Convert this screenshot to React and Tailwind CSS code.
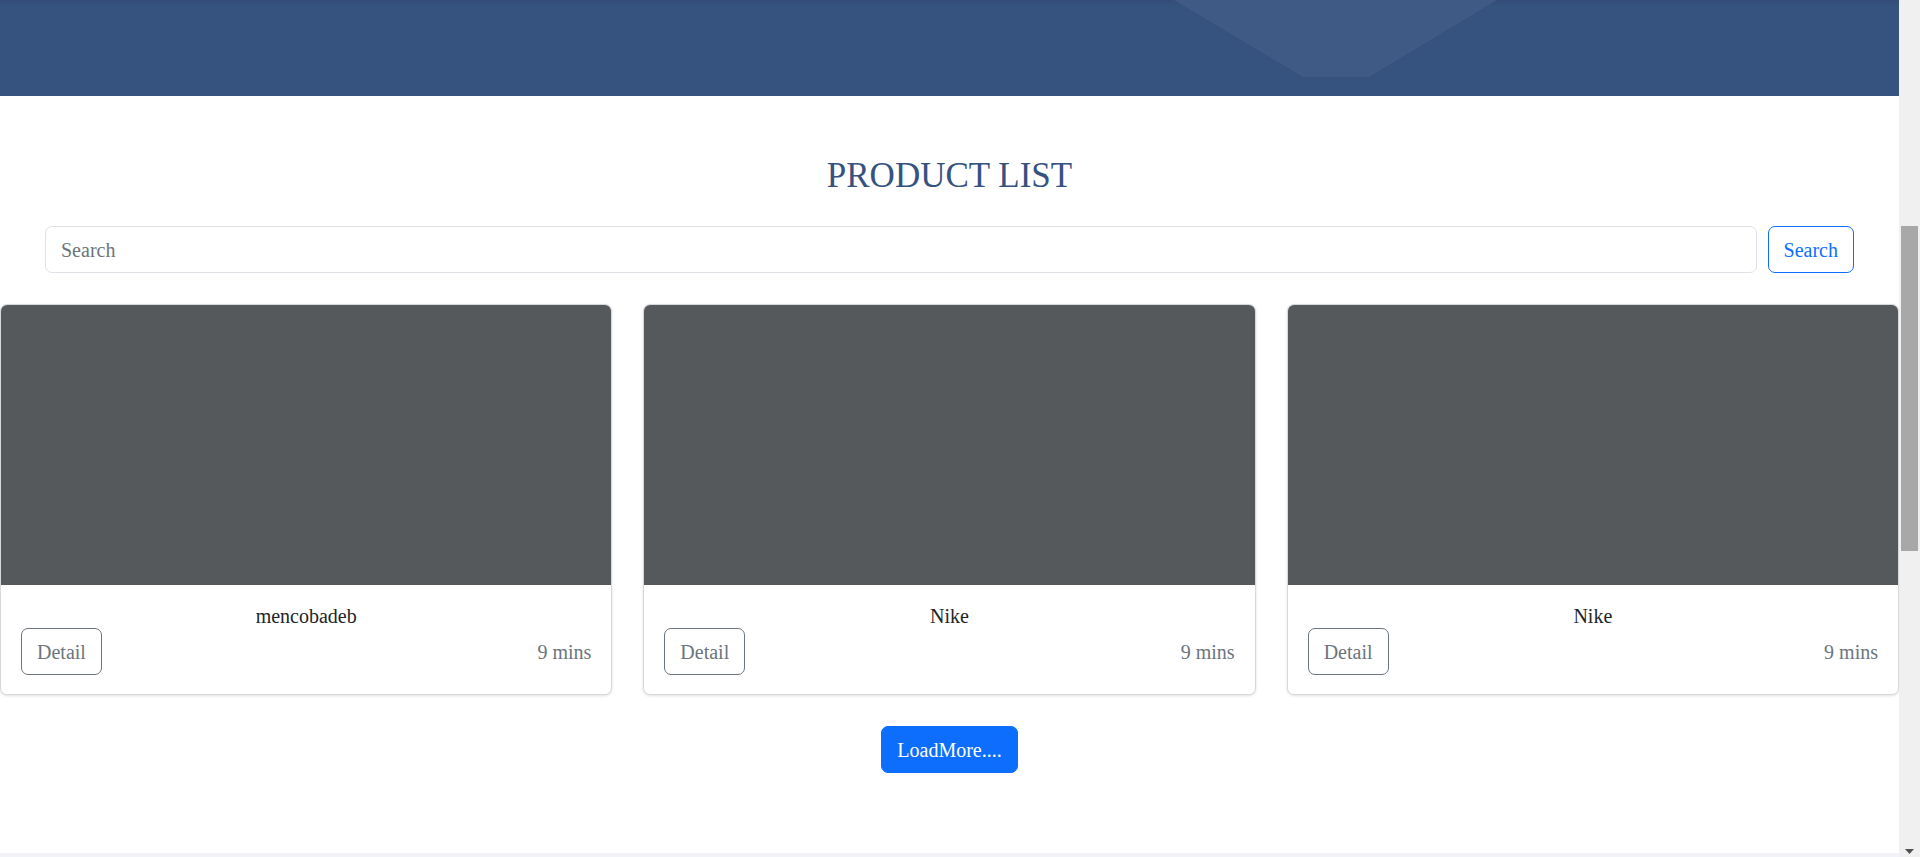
import React from "react";

const products = [
  { name: "mencobadeb", time: "9 mins" },
  { name: "Nike", time: "9 mins" },
  { name: "Nike", time: "9 mins" },
];

function Card({ name, time }) {
  return (
    <div className="flex flex-col overflow-hidden rounded-[7px] border border-[#d6d8db] bg-white shadow-[0_1px_3px_rgba(0,0,0,0.12)]">
      <div className="h-[280px] bg-[#55595c]" />
      <div className="flex flex-col px-5 pt-[19px] pb-[19px]">
        <div className="text-center text-[20px] leading-[24px] text-[#212529]">{name}</div>
        <div className="flex items-center justify-between">
          <button className="h-[47px] rounded-[7px] border border-[#6c757d] bg-white px-[15px] pt-[1px] text-[20px] leading-[30px] text-[#6c757d]">
            Detail
          </button>
          <span className="text-[20px] leading-[30px] text-[#6c757d]">{time}</span>
        </div>
      </div>
    </div>
  );
}

export default function App() {
  return (
    <div className="flex h-[857px] w-[1920px] overflow-hidden bg-white font-['Liberation_Serif','Times_New_Roman',serif]">
      <main className="flex min-w-0 flex-1 flex-col">
        <header className="relative h-[96px] shrink-0 bg-[linear-gradient(to_bottom,#334c78_0px,#36527f_6px,#36527f_100%)]">
          <svg
            className="absolute left-0 top-0"
            width="1899"
            height="96"
            viewBox="0 0 1899 96"
          >
            <polygon points="1174,0 1497,0 1369,77 1303,77" fill="#405a86" />
          </svg>
        </header>

        <h3 className="mt-[59px] text-center text-[35px] font-normal leading-[42px] text-[#36527f]">
          PRODUCT LIST
        </h3>

        <div className="mt-[29px] flex gap-[11px] px-[45px]">
          <input
            type="text"
            placeholder="Search"
            className="h-[47px] flex-1 rounded-[7px] border border-[#dee2e6] bg-white px-[15px] pt-[2px] text-[20px] leading-[30px] text-[#212529] outline-none placeholder:text-[#6c757d]"
          />
          <button className="h-[47px] rounded-[7px] border border-[#0d6efd] bg-white px-[15px] pt-[1px] text-[20px] leading-[30px] text-[#0d6efd]">
            Search
          </button>
        </div>

        <div className="mt-[31px] grid grid-cols-3 gap-[31px]">
          {products.map((p, i) => (
            <Card key={i} name={p.name} time={p.time} />
          ))}
        </div>

        <div className="mt-[31px] flex justify-center">
          <button className="h-[47px] rounded-[7px] border border-[#0d6efd] bg-[#0d6efd] px-[15px] text-[20px] leading-[30px] text-white">
            LoadMore....
          </button>
        </div>

        <div className="flex-1" />
        <div className="h-[4px] shrink-0 bg-[#f1f3f9]" />
      </main>

      <aside className="flex w-[21px] shrink-0 flex-col items-center bg-[#f0f0f0]">
        <div className="mt-[226px] h-[325px] w-[17px] bg-[#a8a8a8]" />
        <div className="flex-1" />
        <svg width="9" height="5" viewBox="0 0 9 5" className="mb-[3px]">
          <polygon points="0,0 9,0 4.5,5" fill="#505050" />
        </svg>
      </aside>
    </div>
  );
}
